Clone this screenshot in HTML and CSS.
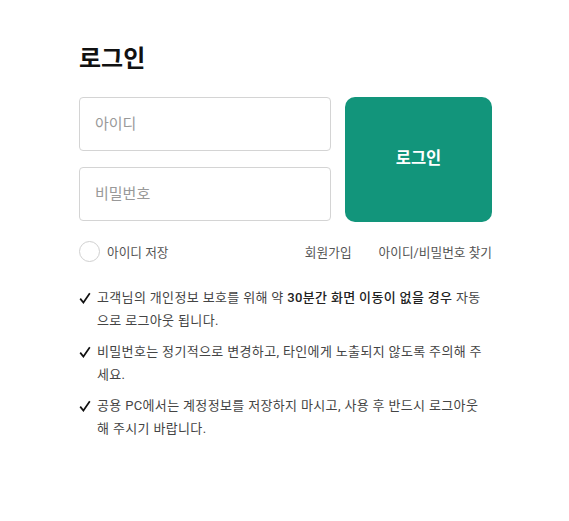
FILE: index.html
```html
<!DOCTYPE html>
<html lang="ko">
<head>
<meta charset="utf-8">
<link rel="stylesheet" href="styles.css">
</head>
<body>
<div class="wrap">
  <h1 class="title">로그인</h1>
  <div class="form">
    <div class="fields">
      <input class="field" type="text" placeholder="아이디">
      <input class="field" type="password" placeholder="비밀번호">
    </div>
    <button class="btn">로그인</button>
  </div>
  <div class="opts">
    <label class="save"><span class="circle"></span><span>아이디 저장</span></label>
    <div class="links">
      <a class="link">회원가입</a>
      <a class="link">아이디/비밀번호 찾기</a>
    </div>
  </div>
  <ul class="notes">
    <li class="note"><svg class="chk" viewBox="0 0 12 12" width="12" height="12"><path d="M1.2 6.6 L4.4 10.6 L10.8 1.2" fill="none" stroke="#111" stroke-width="1.7" stroke-linejoin="miter"/></svg><p>고객님의 개인정보 보호를 위해 약 <b>30분간 화면 이동이 없을 경우</b> 자동으로 로그아웃 됩니다.</p></li>
    <li class="note"><svg class="chk" viewBox="0 0 12 12" width="12" height="12"><path d="M1.2 6.6 L4.4 10.6 L10.8 1.2" fill="none" stroke="#111" stroke-width="1.7" stroke-linejoin="miter"/></svg><p>비밀번호는 정기적으로 변경하고, 타인에게 노출되지 않도록 주의해 주세요.</p></li>
    <li class="note"><svg class="chk" viewBox="0 0 12 12" width="12" height="12"><path d="M1.2 6.6 L4.4 10.6 L10.8 1.2" fill="none" stroke="#111" stroke-width="1.7" stroke-linejoin="miter"/></svg><p>공용 PC에서는 계정정보를 저장하지 마시고, 사용 후 반드시 로그아웃 해 주시기 바랍니다.</p></li>
  </ul>
</div>
</body>
</html>
```
FILE: styles.css
```css
* { box-sizing: border-box; }
body {
  margin: 0;
  background: #fff;
  font-family: Roboto, "Noto Sans CJK KR", sans-serif;
  color: #333;
}
.wrap {
  width: 413px;
  margin-left: 79px;
  padding-top: 42px;
}
.title {
  margin: 0;
  font-size: 24px;
  font-weight: 700;
  color: #111;
  line-height: 34px;
}
.form {
  display: flex;
  gap: 14px;
  margin-top: 21px;
}
.fields {
  display: flex;
  flex-direction: column;
  gap: 16px;
  width: 252px;
}
.field {
  height: 54px;
  width: 100%;
  border: 1px solid #d4d4d4;
  border-radius: 4px;
  padding: 0 15px;
  font-family: inherit;
  font-size: 15px;
  color: #333;
  outline: none;
}
.field::placeholder { color: #999; }
.btn {
  flex: 1;
  height: 125px;
  border: 0;
  border-radius: 10px;
  background: #12957b;
  color: #fff;
  font-family: inherit;
  font-size: 16.5px;
  font-weight: 700;
  padding: 0 0 5px;
}
.opts {
  display: flex;
  justify-content: space-between;
  align-items: center;
  margin-top: 19px;
  font-size: 12.7px;
  color: #555;
}
.save {
  display: flex;
  align-items: center;
  gap: 7px;
}
.circle {
  width: 21px;
  height: 21px;
  border: 1px solid #d0d0d0;
  border-radius: 50%;
}
.links { display: flex; gap: 27px; }
.link { color: #555; }
.notes {
  list-style: none;
  margin: 24px 0 0;
  padding: 0;
  font-size: 13px;
  letter-spacing: 0.35px;
  color: #444;
}
.note {
  display: flex;
  gap: 6px;
  margin-bottom: 8px;
}
.chk {
  flex: none;
  margin-top: 6px;
}
.note p {
  margin: 0;
  line-height: 23px;
}
.note b { font-weight: 500; color: #222; }
```
